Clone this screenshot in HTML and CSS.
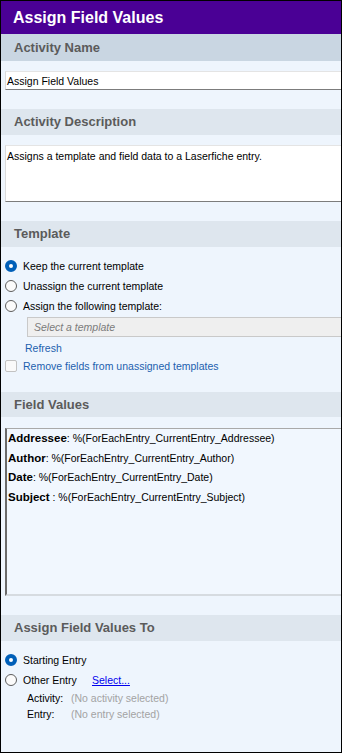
FILE: index.html
```html
<!DOCTYPE html>
<html lang="en">
<head>
    <meta charset="UTF-8" />
    <meta name="viewport" content="width=device-width, initial-scale=1.0" />
    <title>Assign Field Values</title>
    <link rel="stylesheet" href="styles.css">
</head>
<body>
    <div class="panel">
        <div class="title">Assign Field Values</div>

        <div class="section-head active">Activity Name</div>
        <div class="section-body name-body">
            <div class="textbox">Assign Field Values</div>
        </div>

        <div class="section-head">Activity Description</div>
        <div class="section-body desc-body">
            <div class="textbox textarea">Assigns a template and field data to a Laserfiche entry.</div>
        </div>

        <div class="section-head">Template</div>
        <div class="section-body template-body">
            <div class="radio-row"><span class="radio checked"></span>Keep the current template</div>
            <div class="radio-row"><span class="radio"></span>Unassign the current template</div>
            <div class="radio-row"><span class="radio"></span>Assign the following template:</div>
            <div class="select">Select a template</div>
            <div class="refresh">Refresh</div>
            <div class="check-row"><span class="checkbox"></span>Remove fields from unassigned templates</div>
        </div>

        <div class="section-head short">Field Values</div>
        <div class="section-body fields-body">
            <div class="field-list">
                <div class="field"><b>Addressee</b>: %(ForEachEntry_CurrentEntry_Addressee)</div>
                <div class="field"><b>Author</b>: %(ForEachEntry_CurrentEntry_Author)</div>
                <div class="field"><b>Date</b>: %(ForEachEntry_CurrentEntry_Date)</div>
                <div class="field"><b>Subject</b> : %(ForEachEntry_CurrentEntry_Subject)</div>
            </div>
        </div>

        <div class="section-head">Assign Field Values To</div>
        <div class="section-body target-body">
            <div class="radio-row"><span class="radio checked"></span>Starting Entry</div>
            <div class="radio-row"><span class="radio"></span><span class="other-label">Other Entry</span><a class="select-link" href="#">Select...</a></div>
            <div class="info-row"><span class="info-label">Activity:</span><span class="info-value">(No activity selected)</span></div>
            <div class="info-row"><span class="info-label">Entry:</span><span class="info-value">(No entry selected)</span></div>
        </div>
    </div>
</body>
</html>
```

FILE: styles.css
```css
body {
    margin: 0;
    font-family: "Liberation Sans", Arial, sans-serif;
    font-size: 10.5px;
    color: #000;
    background: #fff;
}
.panel {
    width: 342px;
    height: 753px;
    box-sizing: border-box;
    border: 1px solid #000;
    background: #eef5fd;
    overflow: hidden;
}
.title {
    height: 33px;
    line-height: 33px;
    padding-left: 12px;
    background: #4a0095;
    color: #fff;
    font-size: 16px;
    font-weight: bold;
}
.section-head {
    height: 26px;
    line-height: 26px;
    padding-left: 13px;
    background: #dee6ee;
    color: #5b5b5b;
    font-size: 13px;
    font-weight: bold;
}
.section-head.active {
    height: 27px;
    line-height: 27px;
    background: #c9d6e2;
}
.section-head.short {
    height: 25px;
    line-height: 25px;
}
.section-body {
    padding-left: 4px;
}
.name-body,
.desc-body {
    padding-top: 10px;
    padding-bottom: 19px;
}
.textbox {
    height: 19px;
    line-height: 18px;
    box-sizing: border-box;
    margin-right: -20px;
    padding-left: 1px;
    background: #fff;
    border-top: 1px solid #e4e4e4;
    border-left: 1px solid #dadada;
    border-bottom: 1px solid #7c7c7c;
}
.textarea {
    height: 57px;
    line-height: 14px;
    padding-top: 3px;
}
.template-body {
    padding-top: 9px;
    padding-bottom: 18px;
}
.radio-row {
    display: flex;
    align-items: center;
    gap: 6px;
    height: 20px;
}
.radio {
    width: 12px;
    height: 12px;
    box-sizing: border-box;
    border: 1px solid #5d5d5d;
    border-radius: 50%;
    background: #fbfbfb;
    flex-shrink: 0;
}
.radio.checked {
    border: 4px solid #005fb8;
    background: #fff;
}
.select {
    height: 20px;
    line-height: 18px;
    box-sizing: border-box;
    margin: 1px -20px 0 22px;
    padding-left: 6px;
    background: #efefef;
    border: 1px solid #c9c9c9;
    color: #7b7b7b;
    font-style: italic;
}
.refresh {
    height: 16px;
    line-height: 16px;
    margin-top: 3px;
    padding-left: 20px;
    color: #1c5fae;
}
.check-row {
    display: flex;
    align-items: center;
    gap: 6px;
    height: 16px;
    margin-top: 2px;
    color: #1c5fae;
}
.checkbox {
    width: 12px;
    height: 12px;
    box-sizing: border-box;
    border: 1px solid #c2c2c2;
    border-radius: 2px;
    background: #fafafa;
}
.fields-body {
    padding-top: 11px;
    padding-bottom: 19px;
}
.field-list {
    height: 168px;
    box-sizing: border-box;
    margin-right: -20px;
    padding-left: 1px;
    background: #f1f7fe;
    border-top: 1px solid #a9a9a9;
    border-left: 2px solid #6a6a6a;
    border-bottom: 2px solid #d6dbe0;
}
.field {
    height: 19.5px;
    line-height: 19.5px;
    white-space: nowrap;
}
.field b {
    font-size: 11.5px;
}
.target-body {
    padding-top: 9px;
}
.other-label {
    width: 63px;
}
.select-link {
    color: #0000ee;
}
.info-row {
    display: flex;
    height: 16px;
    line-height: 16px;
    padding-left: 22px;
}
.info-label {
    width: 44px;
}
.info-value {
    color: #a3a3a3;
}
```
